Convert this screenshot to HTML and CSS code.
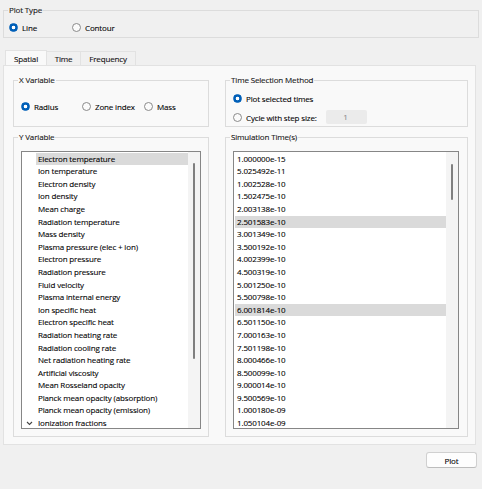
FILE: index.html
```html
<!DOCTYPE html>
<html>
<head>
<meta charset="utf-8">
<link rel="stylesheet" href="styles.css">
</head>
<body>
<fieldset class="ptype">
  <legend>Plot Type</legend>
  <div class="row">
    <label class="radio w63"><span class="dot on"></span>Line</label>
    <label class="radio"><span class="dot"></span>Contour</label>
  </div>
</fieldset>

<div class="tabs">
  <div class="tab sel t1">Spatial</div>
  <div class="tab t2">Time</div>
  <div class="tab t3">Frequency</div>
</div>

<div class="pane">
  <fieldset class="xvar">
    <legend>X Variable</legend>
    <div class="row">
      <label class="radio w61"><span class="dot on"></span>Radius</label>
      <label class="radio w62"><span class="dot"></span>Zone index</label>
      <label class="radio"><span class="dot"></span>Mass</label>
    </div>
  </fieldset>

  <fieldset class="tsel">
    <legend>Time Selection Method</legend>
    <label class="radio"><span class="dot on"></span>Plot selected times</label>
    <div class="radio r2"><span class="dot"></span>Cycle with step size:<span class="spin">1</span></div>
  </fieldset>

  <fieldset class="yvar">
    <legend>Y Variable</legend>
    <div class="list">
      <div class="items">
        <div class="yitem sel"><span class="exp"></span><span class="lbl">Electron temperature</span></div>
        <div class="yitem"><span class="exp"></span><span class="lbl">Ion temperature</span></div>
        <div class="yitem"><span class="exp"></span><span class="lbl">Electron density</span></div>
        <div class="yitem"><span class="exp"></span><span class="lbl">Ion density</span></div>
        <div class="yitem"><span class="exp"></span><span class="lbl">Mean charge</span></div>
        <div class="yitem"><span class="exp"></span><span class="lbl">Radiation temperature</span></div>
        <div class="yitem"><span class="exp"></span><span class="lbl">Mass density</span></div>
        <div class="yitem"><span class="exp"></span><span class="lbl">Plasma pressure (elec + ion)</span></div>
        <div class="yitem"><span class="exp"></span><span class="lbl">Electron pressure</span></div>
        <div class="yitem"><span class="exp"></span><span class="lbl">Radiation pressure</span></div>
        <div class="yitem"><span class="exp"></span><span class="lbl">Fluid velocity</span></div>
        <div class="yitem"><span class="exp"></span><span class="lbl">Plasma internal energy</span></div>
        <div class="yitem"><span class="exp"></span><span class="lbl">Ion specific heat</span></div>
        <div class="yitem"><span class="exp"></span><span class="lbl">Electron specific heat</span></div>
        <div class="yitem"><span class="exp"></span><span class="lbl">Radiation heating rate</span></div>
        <div class="yitem"><span class="exp"></span><span class="lbl">Radiation cooling rate</span></div>
        <div class="yitem"><span class="exp"></span><span class="lbl">Net radiation heating rate</span></div>
        <div class="yitem"><span class="exp"></span><span class="lbl">Artificial viscosity</span></div>
        <div class="yitem"><span class="exp"></span><span class="lbl">Mean Rosseland opacity</span></div>
        <div class="yitem"><span class="exp"></span><span class="lbl">Planck mean opacity (absorption)</span></div>
        <div class="yitem"><span class="exp"></span><span class="lbl">Planck mean opacity (emission)</span></div>
        <div class="yitem"><span class="exp"><svg width="7" height="5" viewBox="0 0 7 5"><path d="M1 1 L3.5 3.5 L6 1" fill="none" stroke="#444" stroke-width="1.1"/></svg></span><span class="lbl">Ionization fractions</span></div>
      </div>
      <div class="sb"><div class="thumb ythumb"></div></div>
    </div>
  </fieldset>

  <fieldset class="sim">
    <legend>Simulation Time(s)</legend>
    <div class="list">
      <div class="items sitems">
        <div class="sitem">1.000000e-15</div>
        <div class="sitem">5.025492e-11</div>
        <div class="sitem">1.002528e-10</div>
        <div class="sitem">1.502475e-10</div>
        <div class="sitem">2.003138e-10</div>
        <div class="sitem sel">2.501583e-10</div>
        <div class="sitem">3.001349e-10</div>
        <div class="sitem">3.500192e-10</div>
        <div class="sitem">4.002399e-10</div>
        <div class="sitem">4.500319e-10</div>
        <div class="sitem">5.001250e-10</div>
        <div class="sitem">5.500798e-10</div>
        <div class="sitem sel">6.001814e-10</div>
        <div class="sitem">6.501150e-10</div>
        <div class="sitem">7.000163e-10</div>
        <div class="sitem">7.501198e-10</div>
        <div class="sitem">8.000466e-10</div>
        <div class="sitem">8.500099e-10</div>
        <div class="sitem">9.000014e-10</div>
        <div class="sitem">9.500569e-10</div>
        <div class="sitem">1.000180e-09</div>
        <div class="sitem">1.050104e-09</div>
      </div>
      <div class="sb"><div class="thumb sthumb"></div></div>
    </div>
  </fieldset>
</div>

<div class="footer">
  <button class="btn">Plot</button>
</div>
</body>
</html>
```

FILE: styles.css
```css
* { box-sizing: border-box; }
html, body { margin: 0; }
body {
  width: 482px;
  height: 489px;
  overflow: hidden;
  background: #f0f0f0;
  font-family: "Open Sans", "Noto Sans", sans-serif;
  font-size: 8px;
  letter-spacing: -0.15px;
  -webkit-text-stroke: 0.1px #000;
  color: #000;
  padding: 5px 3px 0 3px;
}
fieldset {
  margin: 0;
  padding: 0;
  border: 1px solid #dcdcdc;
  min-width: 0;
}
legend {
  padding: 0 1px;
  margin-left: -3px;
  height: 10px;
  line-height: 10px;
  color: #1a1a1a;
}
.ptype legend { margin-left: -1px; }
.row { display: flex; }
.radio {
  display: flex;
  align-items: center;
  height: 13px;
  white-space: nowrap;
}
.dot {
  flex: none;
  width: 9px;
  height: 9px;
  border-radius: 50%;
  border: 1px solid #8a8a8a;
  background: #fbfbfb;
  margin-right: 4px;
}
.dot.on {
  border-color: #005fb8;
  background: radial-gradient(circle, #fff 0 1.6px, #005fb8 2.1px);
}
.w63 { width: 63px; }
.w61 { width: 61px; }
.w62 { width: 62px; }

.ptype { padding: 6px 0 3px 5px; }

.tabs {
  display: flex;
  align-items: flex-end;
  height: 15px;
  margin-top: 12px;
  padding-left: 2px;
}
.tab {
  height: 14px;
  border: 1px solid #e2e2e2;
  border-bottom: none;
  background: #f0f0f0;
  display: flex;
  align-items: center;
  justify-content: center;
  color: #111;
}
.tab.sel { height: 15px; background: #f9f9f9; }
.t1 { width: 42px; }
.t2 { width: 35px; margin-left: -1px; }
.t3 { width: 56px; margin-left: -1px; }

.pane {
  margin-right: 3px;
  height: 380px;
  border: 1px solid #e2e2e2;
  background: #f9f9f9;
  padding: 9px 7px 7px 9px;
  display: grid;
  grid-template-columns: 196px 1fr;
  grid-template-rows: 52px 1fr;
  column-gap: 16px;
  row-gap: 5px;
}
.xvar { padding: 15px 0 0 7px; }
.tsel { padding: 7px 0 0 7px; }
.tsel .r2 { margin-top: 5px; height: 14px; }
.spin {
  width: 41px;
  height: 14px;
  margin-left: 9px;
  background: #ebebeb;
  border-radius: 2px;
  color: #8c8c8c;
  -webkit-text-stroke: 0.1px #8c8c8c;
  text-align: right;
  padding-right: 19px;
  line-height: 14px;
}

.yvar, .sim { padding: 9px 7px 0 7px; }
.sim { padding-right: 8px; }
.list {
  height: 278px;
  border: 1px solid #868686;
  background: #fff;
  display: flex;
  overflow: hidden;
}
.items {
  flex: 1;
  overflow: hidden;
  padding-top: 0.6px;
}
.yitem {
  display: flex;
  height: 12.6px;
  line-height: 12.6px;
  white-space: nowrap;
}
.exp {
  width: 14px;
  flex: none;
  display: flex;
  align-items: center;
  justify-content: center;
  padding-top: 1px;
}
.lbl { flex: 1; padding-left: 2px; }
.yitem.sel .lbl { background: #dadada; }
.sitem {
  margin-left: 1px;
  padding-left: 2px;
  height: 12.6px;
  line-height: 12.6px;
}
.sitem.sel { background: #dadada; }
.sb {
  width: 12px;
  flex: none;
  background: #f4f4f4;
}
.thumb {
  width: 2px;
  margin: 0 auto;
  border-radius: 1px;
  background: #7f7f7f;
}
.ythumb { margin-top: 11px; height: 196px; }
.sthumb { margin-top: 12px; height: 36px; }

.footer {
  display: flex;
  justify-content: flex-end;
  padding: 7px 2px 0 0;
}
.btn {
  width: 51px;
  height: 16px;
  border: 1px solid #d0d0d0;
  border-bottom-color: #bcbcbc;
  border-radius: 3px;
  background: #fdfdfd;
  font-family: inherit;
  font-size: 8px;
  letter-spacing: -0.15px;
  -webkit-text-stroke: 0.1px #000;
  color: #000;
  padding: 0;
}
```
